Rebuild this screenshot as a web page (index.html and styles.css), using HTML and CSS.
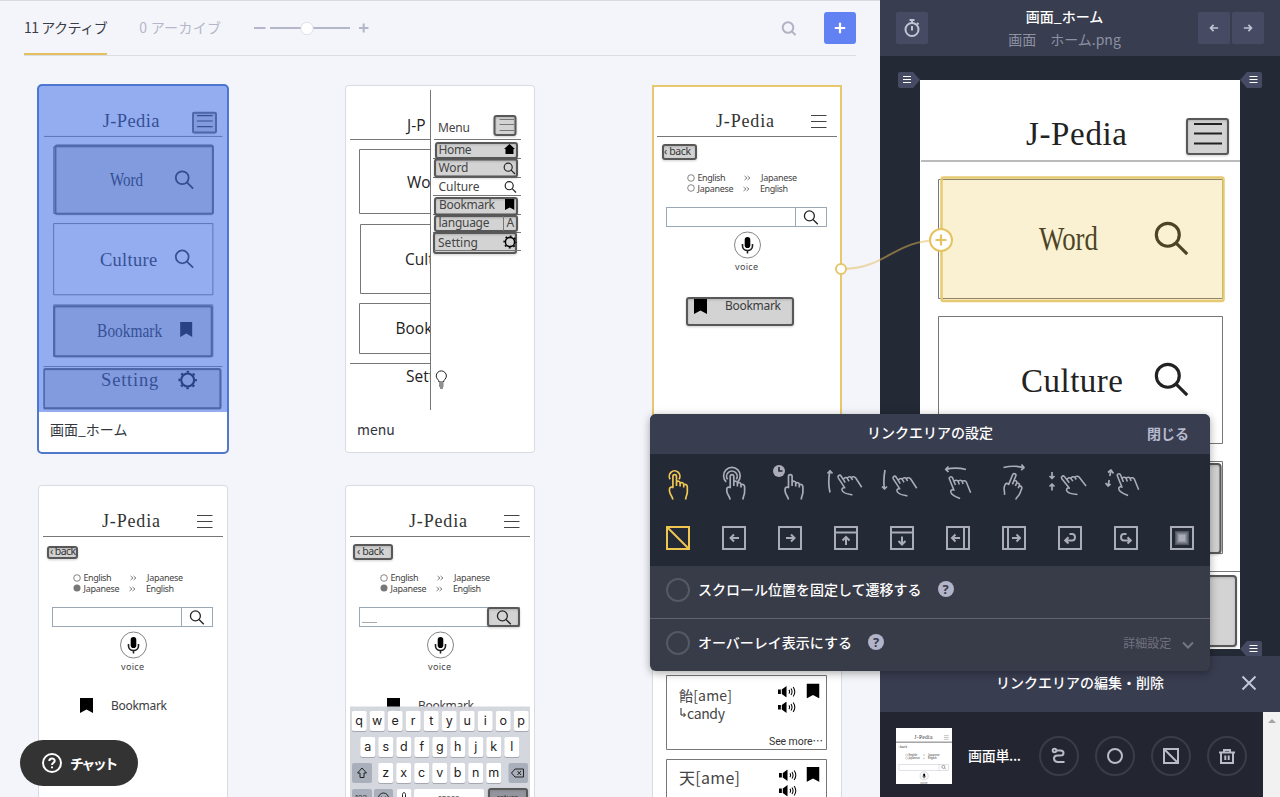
FILE: index.html
```html
<!DOCTYPE html>
<html lang="ja">
<head>
    <meta charset="UTF-8">
    <meta name="viewport" content="width=device-width, initial-scale=1.0">
    <title>J-Pedia - プロトタイプ</title>
    <link rel="stylesheet" href="styles.css">
</head>
<body>
    <!-- 共通シンボル -->
    <svg class="defs" width="0" height="0">
        <symbol id="glass" viewBox="0 0 20 20" overflow="visible">
            <circle cx="8" cy="8" r="6.2"/>
            <path d="M12.5 12.5L18.5 18.5"/>
        </symbol>
        <symbol id="mark" viewBox="0 0 13 15" preserveAspectRatio="none">
            <path d="M0 0H13V15L6.5 11.5L0 15Z"/>
        </symbol>
        <symbol id="gear" viewBox="-10 -10 20 20">
            <circle r="6.6" fill="none" stroke="#000" stroke-width="2.2"/>
            <circle r="8.4" fill="none" stroke="#000" stroke-width="2" stroke-dasharray="2.6 3.997" stroke-dashoffset="1.3"/>
        </symbol>
        <symbol id="speaker" viewBox="0 0 19 12">
            <path d="M0 3.5H3V8.5H0ZM4 3.5L9 0V12L4 8.5Z"/>
            <path d="M11.5 4Q13 6 11.5 8M13.7 2.5Q16 6 13.7 9.5M16 1Q19.5 6 16 11" fill="none" stroke="#000" stroke-width="1.1"/>
        </symbol>
        <symbol id="hand" viewBox="0 0 20 30" overflow="visible">
            <path d="M4.2 29.5C3.6 26 .8 24.5 .8 21V19C.8 17.3 2.5 16.8 4.2 17.5V6.5C4.2 4.1 7.8 4.1 7.8 6.5V16M7.8 12C9 10.6 11.4 11 11.4 13V16.5M11.4 13.2C13 12 15 12.8 15 14.5V17.5M15 14.8C17 13.8 18.6 15 18.6 17V22C18.6 25 17 26 17 29.5"/>
        </symbol>
        <symbol id="swipe-hand" viewBox="0 0 20 30" overflow="visible">
            <path d="M7 30.5C4.5 28 .5 25 .2 21.5C0 18.5 2 17.5 4.2 19.5V6.5C4.2 4.1 7.8 4.1 7.8 6.5V15M7.8 11C9.2 9.6 12 10.2 12 12.4V16M12 12.4C14 11.2 16 12.2 16 14.2V17M16 14.2C18 13.4 20 14.8 20 17V29"/>
        </symbol>

        <!-- ホーム画面 -->
        <symbol id="screen-home" viewBox="0 0 320 569">
            <rect class="paper" width="320" height="569"/>
            <text class="mincho" x="106" y="65" textLength="101">J-Pedia</text>
            <rect class="spot" x="267" y="39" width="41" height="35" rx="2"/>
            <path class="bar" d="M274 44H302M274 53.5H302M274 63.5H302"/>
            <path class="rule" d="M1 81H320"/>
            <rect class="frame" x="18.5" y="99.5" width="284" height="119"/>
            <text class="mincho" x="119" y="170" textLength="59" lengthAdjust="spacingAndGlyphs">Word</text>
            <use class="glass" href="#glass" x="233" y="140" width="37" height="37"/>
            <rect class="frame" x="18.5" y="236.5" width="284" height="127"/>
            <text class="mincho" x="101" y="312" textLength="102">Culture</text>
            <use class="glass" href="#glass" x="233" y="281" width="37" height="37"/>
            <rect class="frame" x="18.5" y="381.5" width="284" height="92"/>
            <rect class="spot" x="19.5" y="384" width="281" height="89" rx="3"/>
            <text class="mincho" x="96" y="439" textLength="116" lengthAdjust="spacingAndGlyphs">Bookmark</text>
            <use href="#mark" x="244" y="412" width="22" height="27"/>
            <path class="rule" d="M0 491.5H320"/>
            <rect class="spot" x="1" y="496" width="315" height="70" rx="3"/>
            <text class="mincho" x="103" y="527" textLength="102">Setting</text>
            <use href="#gear" x="240" y="498" width="35" height="35"/>
        </symbol>

        <!-- 検索画面の共通部分 -->
        <symbol id="screen-search" viewBox="0 0 180 320">
            <text class="mincho-s" x="59" y="36" textLength="58">J-Pedia</text>
            <path class="bar-s" d="M154 24.5H169.5M154 30.5H169.5M154 36.5H169.5"/>
            <path class="rule" d="M0 45.5H180"/>
            <circle class="radio" cx="34" cy="87" r="3.3"/>
            <text class="tiny" x="40.5" y="90" textLength="28">English</text>
            <path class="radio" d="M87.5 85L90 87L87.5 89M90.5 85L93 87L90.5 89"/>
            <text class="tiny" x="104" y="90" textLength="36">Japanese</text>
            <text class="tiny" x="40.5" y="101" textLength="36">Japanese</text>
            <path class="radio" d="M86.5 96L89 98L86.5 100M89.5 96L92 98L89.5 100"/>
            <text class="tiny" x="103" y="101" textLength="28">English</text>
            <rect class="field" x="9.5" y="116.5" width="160" height="19"/>
            <path class="field" d="M138.5 116V136"/>
            <circle class="mic-ring" cx="90.5" cy="154" r="13"/>
            <rect x="87.7" y="146" width="5.6" height="11" rx="2.8"/>
            <path class="thin" stroke-width="1.6" d="M85.5 153V155C85.5 161 95.5 161 95.5 155V153M90.5 159V162.5"/>
            <text class="tiny" x="78" y="179" textLength="23">voice</text>
        </symbol>
    </svg>

    <div class="app">
        <main class="board">
            <div class="toolbar">
                <div class="tab active">11 アクティブ</div>
                <div class="tab archive">0 アーカイブ</div>
                <svg class="zoom-slider" width="116" height="16" viewBox="0 0 116 16">
                    <path d="M1 8H12.5M17 8H97M106 8H115.5M110.7 3.5V12.5" fill="none" stroke="#b4b7c9" stroke-width="2"/>
                    <circle cx="54" cy="8.5" r="6.2" fill="#fff" stroke="#d3d5df" stroke-width=".7"/>
                </svg>
                <svg class="find" width="16" height="16" viewBox="0 0 16 16">
                    <circle cx="7" cy="7.5" r="5.3"/>
                    <path d="M11 11.5L14.5 15"/>
                </svg>
                <button class="add-btn">
                    <svg width="12" height="12" viewBox="0 0 12 12"><path d="M6 .8V11.2M.8 6H11.2" stroke="#fff" stroke-width="2.2"/></svg>
                </button>
            </div>

            <div class="cards">
                <div class="card selected">
                    <div class="shot">
                        <svg viewBox="0 0 320 569">
                            <use href="#screen-home" width="320" height="569"/>
                            <rect class="spot" x="21.5" y="97" width="281" height="122" rx="3"/>
                        </svg>
                    </div>
                    <div class="caption">画面_ホーム</div>
                </div>

                <div class="card">
                    <div class="shot">
                        <svg viewBox="0 0 180 320">
                            <text class="sans" x="57" y="39.5">J-P</text>
                            <path class="rule" d="M0 48.5H80M83 48.5H171"/>
                            <path class="frame" d="M80 58.5H9.5V122.5H80M80 133.5H10.5V202.5H80M80 212.5H9.5V262.5H80"/>
                            <path class="rule" d="M0 272.5H80"/>
                            <text class="sans" x="57" y="96.5">Wo</text>
                            <text class="sans" x="55" y="174">Cult</text>
                            <text class="sans" x="45.5" y="243">Book</text>
                            <text class="sans" x="56" y="291">Sett</text>
                            <rect x="80" y="0" width="4" height="320" fill="#fff"/>
                            <path class="rule" d="M80.5 -1V319"/>
                            <path class="thin" d="M89 291C89 288.500 86.2 288 86.2 285A5.100 5.100 0 0 1 96.400 285C96.400 288 93.600 288.500 93.600 291ZM89 293H93.600M89 295H93.600M90 297H93"/>
                            <text class="item" x="88" y="41" textLength="32">Menu</text>
                            <rect class="spot" x="144.5" y="25" width="21" height="19" rx="2"/>
                            <path class="frame" d="M149.5 28.5H164M149.5 33.5H164M149.5 39.5H164"/>
                            <path class="rule" d="M83 67.5H171M83 86.5H171M83 104.5H171M83 123.5H171M83 141.5H171"/>
                            <rect class="spot" x="86" y="52" width="81" height="15" rx="2"/>
                            <rect class="spot" x="85" y="68.5" width="82" height="17" rx="2"/>
                            <rect class="spot" x="85" y="107" width="82" height="16.5" rx="2"/>
                            <rect class="spot" x="85" y="125" width="82" height="15" rx="2"/>
                            <rect class="spot" x="84" y="142" width="82" height="20" rx="2"/>
                            <text class="item" x="88.5" y="62.5" textLength="33">Home</text>
                            <text class="item" x="88.5" y="81" textLength="30">Word</text>
                            <text class="item" x="88.5" y="100" textLength="41">Culture</text>
                            <text class="item" x="89" y="118" textLength="56">Bookmark</text>
                            <text class="item" x="88.5" y="136" textLength="51">language</text>
                            <text class="item" x="88" y="155.5" textLength="40">Setting</text>
                            <path d="M159.5 53L165 58H163.5V63H155.5V58H154Z"/>
                            <use class="glass-s" href="#glass" x="153" y="71" width="13" height="13"/>
                            <use class="glass-s" href="#glass" x="154" y="89.5" width="13" height="13"/>
                            <use href="#mark" x="155" y="108" width="9.5" height="11"/>
                            <path class="frame" d="M153.5 125V140M84 159.5H171"/>
                            <text class="item" x="156.5" y="136">A</text>
                            <use href="#gear" x="153" y="144" width="14" height="14"/>
                        </svg>
                    </div>
                    <div class="caption">menu</div>
                </div>

                <div class="card linked">
                    <div class="shot">
                        <svg viewBox="0 0 180 320">
                            <rect class="spot" x="6" y="54" width="33" height="14" rx="2"/>
                            <rect class="spot" x="30" y="207" width="106" height="27" rx="2"/>
                            <use href="#screen-search" width="180" height="320"/>
                            <text class="back" x="7" y="64" textLength="27">‹ back</text>
                            <circle class="radio" cx="34" cy="97" r="3.3"/>
                            <use class="glass-m" href="#glass" x="146" y="118.5" width="16" height="16"/>
                            <use href="#mark" x="37" y="208" width="13" height="15"/>
                            <text class="label" x="68" y="219" textLength="56">Bookmark</text>
                        </svg>
                    </div>
                </div>

                <div class="card">
                    <div class="shot">
                        <svg viewBox="0 0 180 320">
                            <rect class="spot" x="5" y="56" width="29" height="11" rx="2"/>
                            <use href="#screen-search" width="180" height="320"/>
                            <text class="back" x="7" y="64" textLength="26">‹ back</text>
                            <circle cx="34" cy="97" r="3.5" fill="#777"/>
                            <use class="glass-m" href="#glass" x="146" y="118.5" width="16" height="16"/>
                            <use href="#mark" x="37" y="207" width="13" height="15"/>
                            <text class="label" x="68" y="219" textLength="56">Bookmark</text>
                        </svg>
                    </div>
                </div>

                <div class="card">
                    <div class="shot">
                        <svg viewBox="0 0 180 320">
                            <rect class="spot" x="4" y="54" width="38" height="14" rx="2"/>
                            <use href="#screen-search" width="180" height="320"/>
                            <text class="back" x="7" y="64" textLength="27">‹ back</text>
                            <circle cx="34" cy="97" r="3.5" fill="#777"/>
                            <path class="caret" d="M12 131.5H27"/>
                            <rect class="spot" x="138" y="117" width="31" height="18" rx="2"/>
                            <use class="glass-m" href="#glass" x="146" y="118.5" width="16" height="16"/>
                            <use href="#mark" x="37" y="207" width="13" height="15"/>
                            <text class="label" x="68" y="219" textLength="56">Bookmark</text>
                            <rect x="0" y="215.5" width="180" height="105" fill="#d3d5dc" fill-opacity=".95"/>
                            <g id="keys"></g>
                            <path class="thin" d="M12 277L16.5 282H14V286.5H10V282H7.5Z"/>
                            <path class="thin" d="M161.5 282L165 278H173.5V286H165ZM167.5 280L171 284M171 280L167.5 284"/>
                            <circle class="thin" cx="33.5" cy="307" r="5"/>
                            <path class="thin" d="M52.5 308V303.5C52.5 301 55.5 301 55.5 303.5V308M31.5 305.5V306M35.5 305.5V306"/>
                            <rect class="spot dark" x="139" y="298" width="38" height="24" rx="2"/>
                            <text class="key-s" x="5" y="310">123</text>
                            <text class="key-s" x="88" y="309.5">space</text>
                            <text class="key-s" x="147" y="310">return</text>
                        </svg>
                    </div>
                </div>

                <div class="card">
                    <div class="shot">
                        <svg viewBox="0 0 180 320">
                            <rect class="frame" x="9.5" y="184.5" width="160" height="74"/>
                            <text class="word" x="22" y="210" textLength="53">飴[ame]</text>
                            <path class="thin" d="M24 217V224H28M26.5 222L28.5 224L26.5 226"/>
                            <text class="word" x="30" y="227.5" textLength="38">candy</text>
                            <use href="#speaker" x="121" y="195" width="18" height="11.5"/>
                            <use href="#speaker" x="121" y="210.5" width="18" height="11.5"/>
                            <use href="#mark" x="149.5" y="192.5" width="13" height="15"/>
                            <text class="more" x="112" y="254" textLength="54">See more⋯</text>
                            <rect class="frame" x="9.5" y="268.5" width="160" height="74"/>
                            <text class="word big" x="22" y="293" textLength="61">天[ame]</text>
                            <use href="#speaker" x="122" y="278.5" width="18" height="11.5"/>
                            <use href="#speaker" x="122" y="294" width="18" height="11.5"/>
                            <use href="#mark" x="149.5" y="276" width="13" height="15"/>
                        </svg>
                    </div>
                </div>
            </div>
        </main>

        <aside class="inspector">
            <div class="inspector-head">
                <div class="tool-btn">
                    <svg width="16" height="20" viewBox="0 0 16 20">
                        <circle cx="8" cy="11.5" r="6.5"/>
                        <path d="M5.5 2H10.5M8 2V5M8 8V12.5M13 5L14.5 6.5"/>
                    </svg>
                </div>
                <div class="titles">
                    <div class="title">画面_ホーム</div>
                    <div class="filename">画面　ホーム.png</div>
                </div>
                <div class="nav">
                    <div class="tool-btn"><svg width="10" height="10" viewBox="0 0 12 12"><path d="M11 6H2M5.5 2.2L1.8 6L5.5 9.8"/></svg></div>
                    <div class="tool-btn"><svg width="10" height="10" viewBox="0 0 12 12"><path d="M1 6H10M6.5 2.2L10.2 6L6.5 9.8"/></svg></div>
                </div>
            </div>

            <div class="stage">
                <div class="preview">
                    <svg class="preview-screen" viewBox="0 0 320 569">
                        <use href="#screen-home" width="320" height="569"/>
                        <rect class="active-spot" x="21.5" y="97.5" width="282" height="123.5" rx="2"/>
                    </svg>
                    <svg class="tag tag-left" width="22" height="16" viewBox="0 0 22 16"><path class="tag-bg" d="M2 0H15L22 8L15 16H2Q0 16 0 14V2Q0 0 2 0Z"/><path class="tag-bars" d="M5 4.5H13M5 7.5H13M5 10.5H13"/></svg>
                    <svg class="tag tag-right" width="22" height="16" viewBox="0 0 22 16"><path class="tag-bg" d="M20 0H7L0 8L7 16H20Q22 16 22 14V2Q22 0 20 0Z"/><path class="tag-bars" d="M9.5 4.5H17.5M9.5 7.5H17.5M9.5 10.5H17.5"/></svg>
                    <svg class="tag tag-bottom" width="22" height="16" viewBox="0 0 22 16"><path class="tag-bg" d="M20 0H7L0 8L7 16H20Q22 16 22 14V2Q22 0 20 0Z"/><path class="tag-bars" d="M9.5 4.5H17.5M9.5 7.5H17.5M9.5 10.5H17.5"/></svg>
                </div>
            </div>

            <div class="edit-head">
                <span>リンクエリアの編集・削除</span>
                <svg class="close" width="16" height="16" viewBox="0 0 16 16"><path d="M1.5 1.5L14.5 14.5M14.5 1.5L1.5 14.5"/></svg>
            </div>
            <div class="edit-body">
                <div class="edit-row">
                    <svg class="thumb" viewBox="0 0 180 180">
                        <rect class="paper" width="180" height="180"/>
                        <use href="#screen-search" width="180" height="320"/>
                        <text class="back" x="7" y="64">‹ back</text>
                        <circle class="radio" cx="34" cy="97" r="3.3"/>
                        <use class="glass-m" href="#glass" x="146" y="118.5" width="16" height="16"/>
                    </svg>
                    <span class="edit-name">画面単...</span>
                    <div class="round-btns">
                        <div class="round-btn"><svg width="20" height="20" viewBox="0 0 20 20"><circle cx="5.5" cy="4.5" r="1.8"/><path d="M7.5 4.500H11.500Q14.500 4.500 14.500 7T11.500 9.500H8.500Q5 9.500 5 12.500T8.500 16H15.500"/></svg></div>
                        <div class="round-btn"><svg width="20" height="20" viewBox="0 0 20 20"><circle cx="10" cy="10" r="7"/></svg></div>
                        <div class="round-btn"><svg width="20" height="20" viewBox="0 0 20 20"><path d="M3 3H17V17H3ZM3 3L17 17"/></svg></div>
                        <div class="round-btn"><svg width="20" height="20" viewBox="0 0 20 20"><path d="M2 6.5H18M4 6.5V17H16V6.5M7 6.5V4H13V6.5M8.3 9.5V14M11.7 9.5V14"/></svg></div>
                    </div>
                </div>
                <div class="scrollbar"><i></i></div>
            </div>
        </aside>
    </div>

    <!-- リンク線 -->
    <svg class="connector" width="124" height="60" viewBox="0 0 124 60">
        <path d="M9 43C56 43 60 14 109 14" fill="none" stroke="#e3b957" stroke-width="2" stroke-opacity=".5"/>
        <circle cx="9" cy="43" r="5" fill="#fff" stroke="#e6c66a" stroke-width="2"/>
        <circle cx="109" cy="14" r="11" fill="#fff" stroke="#e6c35f" stroke-width="2"/>
        <path d="M103.5 14H114.5M109 8.5V19.5" stroke="#e6c35f" stroke-width="2.2"/>
    </svg>

    <div class="popover">
        <div class="popover-head">
            <span>リンクエリアの設定</span>
            <b>閉じる</b>
        </div>
        <div class="icon-grid">
            <svg class="on" viewBox="-28 -28 56 56"><use href="#hand" x="-9.3" y="-14" width="20" height="30"/><path d="M-7.8 -4.8A5.3 5.3 0 1 1 1 -4.8"/></svg>
            <svg viewBox="-28 -28 56 56"><use href="#hand" x="-8" y="-14" width="20" height="30"/><path d="M-6.5 -4.6A5.3 5.3 0 1 1 2.3 -4.6M-7.8 -2.2A8.3 8.3 0 1 1 3.6 -2.2"/></svg>
            <svg viewBox="-28 -28 56 56"><use href="#hand" x="-5.7" y="-14" width="20" height="30"/><circle class="clock" cx="-11" cy="-13" r="6"/><path class="clock-hand" d="M-11 -17V-13H-7.5"/></svg>
            <svg viewBox="-28 -28 56 56"><use href="#swipe-hand" width="20" height="30" transform="translate(2 -1) rotate(-33) scale(.92) translate(-10 -17)"/><path d="M-16 8.5Q-18.5 -2 -16 -13M-18.5 -10.5L-16 -13.3L-13.5 -10.5"/></svg>
            <svg viewBox="-28 -28 56 56"><use href="#swipe-hand" width="20" height="30" transform="translate(1 0) rotate(-33) scale(.92) translate(-10 -17)"/><path d="M-17 -14Q-19 -3 -17.5 5M-20 2.5L-17.5 5L-15 2.5"/></svg>
            <svg viewBox="-28 -28 56 56"><use href="#swipe-hand" width="20" height="30" transform="translate(0 2) rotate(-22) scale(.92) translate(-10 -17)"/><path d="M8 -14.5Q-2 -17 -12 -14.7M-9.5 -17.5L-12.3 -14.7L-9.5 -12"/></svg>
            <svg viewBox="-28 -28 56 56"><use href="#hand" width="20" height="30" transform="translate(0 2) rotate(22) scale(.95) translate(-10 -17)"/><path d="M-10.5 -16.5Q0 -19 10 -16.5M7.5 -19.5L10 -16.5L7.2 -14"/></svg>
            <svg viewBox="-28 -28 56 56"><use href="#swipe-hand" width="20" height="30" transform="translate(2 -1) rotate(-38) scale(.92) translate(-10 -17)"/><path d="M-18 -12V-5.5M-20.5 -8L-18 -5.5L-15.5 -8M-18 6.5V0M-20.5 2.5L-18 0L-15.5 2.5"/></svg>
            <svg viewBox="-28 -28 56 56"><use href="#swipe-hand" width="20" height="30" transform="translate(0 -1) rotate(-22) scale(.92) translate(-10 -17)"/><path d="M-15 -13.5L-16.2 -8M-16.8 -4L-18 2M-18 -11.5L-15 -14L-12.5 -10.5M-20.5 -1L-18 2L-15.5 0"/></svg>
            <i></i>

            <svg class="on" viewBox="-28 -28 56 56"><path d="M-11 -11H11V11H-11ZM-11 -11L11 11"/></svg>
            <svg viewBox="-28 -28 56 56"><path d="M-11 -11H11V11H-11ZM5 0H-3M0 -3.5L-3.5 0L0 3.5"/></svg>
            <svg viewBox="-28 -28 56 56"><path d="M-11 -11H11V11H-11ZM-4 0H4M1 -3.5L4.5 0L1 3.5"/></svg>
            <svg viewBox="-28 -28 56 56"><path d="M-11 -11H11V11H-11ZM-11 -5.5H11M0 7V-.5M-3.5 2.5L0 -1L3.5 2.5"/></svg>
            <svg viewBox="-28 -28 56 56"><path d="M-11 -11H11V11H-11ZM-11 -5.5H11M0 -1.5V6M-3.5 3L0 6.5L3.5 3"/></svg>
            <svg viewBox="-28 -28 56 56"><path d="M-11 -11H11V11H-11ZM6 -11V11M2 0H-5.5M-2.5 -3.5L-6 0L-2.5 3.5"/></svg>
            <svg viewBox="-28 -28 56 56"><path d="M-11 -11H11V11H-11ZM-6 -11V11M-2 0H5.5M2.5 -3.5L6 0L2.5 3.5"/></svg>
            <svg viewBox="-28 -28 56 56"><path d="M-11 -11H11V11H-11ZM-.5 -4H2C6 -4 6 2.5 2 2.5H-4M-1.5 -.8L-4.8 2.5L-1.5 5.5"/></svg>
            <svg viewBox="-28 -28 56 56"><path d="M-11 -11H11V11H-11ZM.5 -4H-2C-6 -4 -6 2.5 -2 2.5H4M1.5 -.8L4.8 2.5L1.5 5.5"/></svg>
            <svg viewBox="-28 -28 56 56"><path d="M-11 -11H11V11H-11Z"/><g class="fade"><path d="M-7 -7H7V7H-7Z" opacity=".35"/><path d="M-5.5 -5.5H5.5V5.5H-5.5Z" opacity=".5"/><path d="M-3.5 -3.5H3.5V3.5H-3.5Z"/></g></svg>
        </div>
        <div class="option">
            <span class="check"></span>
            <span>スクロール位置を固定して遷移する</span>
            <span class="help">?</span>
        </div>
        <div class="option">
            <span class="check"></span>
            <span>オーバーレイ表示にする</span>
            <span class="help">?</span>
            <span class="detail">詳細設定 <svg width="12" height="8" viewBox="0 0 12 8"><path d="M1 1.5L6 6.5L11 1.5"/></svg></span>
        </div>
    </div>

    <div class="chat">
        <svg width="20" height="20" viewBox="0 0 20 20">
            <circle cx="10" cy="10" r="9"/>
            <path d="M7.3 8C7.3 4.6 12.7 4.6 12.7 7.8C12.7 9.8 10 9.8 10 12M10 13.6V15.2"/>
        </svg>
        <span>チャット</span>
    </div>

    <script>
        // キーボードのキーを描画
        const svgNS = 'http://www.w3.org/2000/svg';
        const keys = document.getElementById('keys');

        function addKey(x, y, w, label, cls) {
            const rect = document.createElementNS(svgNS, 'rect');
            rect.setAttribute('x', x);
            rect.setAttribute('y', y);
            rect.setAttribute('width', w);
            rect.setAttribute('height', 20);
            rect.setAttribute('rx', 2);
            rect.setAttribute('class', cls || 'key');
            keys.appendChild(rect);
            if (!label) return;
            const text = document.createElementNS(svgNS, 'text');
            text.setAttribute('x', x + w / 2);
            text.setAttribute('y', y + 14);
            text.setAttribute('class', 'key-text');
            text.textContent = label;
            keys.appendChild(text);
        }

        [['qwertyuiop', 1.7, 220], ['asdfghjkl', 10.3, 246], ['zxcvbnm', 28.2, 272]].forEach(([row, x, y]) => {
            row.split('').forEach((c, i) => addKey(x + i * 18, y, 15, c));
        });
        addKey(2, 272, 20, '', 'key-gray');
        addKey(158.5, 272, 19.5, '', 'key-gray');
        addKey(2, 298, 20, '', 'key-gray');
        addKey(24, 298, 19, '', 'key-gray');
        addKey(47, 298, 14.5, '');
        addKey(64, 298, 70, '');
    </script>
</body>
</html>
```
FILE: styles.css
```css
* {
    box-sizing: border-box;
    margin: 0;
    padding: 0;
}

body {
    font-family: "Noto Sans CJK JP", sans-serif;
    font-size: 14px;
    height: 100vh;
    overflow: hidden;
    background: #f4f5fa;
    color: #33363f;
}

.defs {
    position: absolute;
}

.app {
    display: flex;
    height: 100vh;
}

/* ボード */
.board {
    flex: 1;
    overflow: hidden;
    border-top: 1px solid #d9dae0;
}

.toolbar {
    display: flex;
    align-items: center;
    height: 55px;
    margin: 0 24px;
    border-bottom: 1px solid #dcdde3;
}

.tab {
    height: 54px;
    line-height: 53px;
    margin-right: 32px;
    color: #b4b7c9;
    white-space: nowrap;
    letter-spacing: -0.5px;
}

.tab.active {
    color: #3a3d46;
    border-bottom: 2px solid #e3bf60;
}

.tab.archive {
    letter-spacing: 0.3px;
}

.find {
    margin-left: auto;
    margin-right: 27px;
    fill: none;
    stroke: #b0b3c4;
    stroke-width: 2;
}

.add-btn {
    width: 32px;
    height: 32px;
    border: none;
    border-radius: 3px;
    background: #6281f3;
    display: flex;
    align-items: center;
    justify-content: center;
}

.cards {
    display: grid;
    grid-template-columns: repeat(3, 190px);
    grid-auto-rows: 368px;
    gap: 32px 117px;
    padding: 29px 38px 0;
}

.card {
    background: #fff;
    border-radius: 4px;
    box-shadow: inset 0 0 0 1px #dadbe1;
}

.shot {
    position: relative;
    height: 327px;
    padding: 6px 5px 0;
}

.shot svg {
    display: block;
    width: 180px;
    height: 320px;
    overflow: visible;
}

.card:nth-child(n+4) .shot svg {
    overflow: hidden;
}

.card.selected {
    outline: 2px solid #5079ca;
    outline-offset: -1px;
}

.card.selected .shot svg {
    height: 319px;
}

.card.selected .shot::after {
    content: "";
    position: absolute;
    inset: 0;
    border-radius: 4px 4px 0 0;
    background: rgba(69, 114, 229, 0.58);
}

.card.linked {
    border-radius: 0;
    box-shadow: inset 0 0 0 2px #e8c86e;
}

.caption {
    padding-left: 12px;
    line-height: 34px;
}

/* 画面の部品 */
.paper {
    fill: #fff;
}

.mincho {
    font: 33px "Liberation Serif", serif;
    fill: #222;
}

.mincho-s {
    font: 18px "Liberation Serif", serif;
    fill: #333;
}

.sans {
    font: 15.5px "Open Sans", sans-serif;
    fill: #222;
}

.item {
    font: 12px "Noto Sans", sans-serif;
    fill: #444;
}

.tiny {
    font: 9px "Noto Sans", sans-serif;
    fill: #444;
}

.back {
    font: 10.5px "Noto Sans", sans-serif;
    fill: #333;
}

.label {
    font: 12px "Noto Sans", sans-serif;
    fill: #3c3c3c;
}

.word {
    font: 14px "Noto Sans CJK JP", sans-serif;
    fill: #444;
}

.word.big {
    font-size: 16px;
}

.more {
    font: 10.5px Roboto, "Noto Sans CJK JP", sans-serif;
    fill: #333;
}

.spot {
    fill: rgba(0, 0, 0, 0.15);
    stroke: #585858;
    stroke-width: 2;
    vector-effect: non-scaling-stroke;
    filter: drop-shadow(0 1px 1px rgba(0, 0, 0, 0.2));
}

.spot.dark {
    fill: rgba(70, 75, 85, 0.4);
}

.active-spot {
    fill: rgba(234, 190, 56, 0.22);
    stroke: #e6c972;
    stroke-width: 2.5;
}

.frame,
.rule {
    fill: none;
    stroke: #777;
    stroke-width: 1;
    vector-effect: non-scaling-stroke;
}

.caret {
    stroke: #aaa;
}

.bar {
    fill: none;
    stroke: #222;
    stroke-width: 2;
}

.bar-s {
    stroke: #444;
    stroke-width: 1;
}

.field {
    fill: none;
    stroke: #9aa7b5;
}

.radio,
.mic-ring {
    fill: none;
    stroke: #666;
    stroke-width: 0.8;
}

.thin {
    fill: none;
    stroke: #222;
}

.glass {
    fill: none;
    stroke: #222;
    stroke-width: 1.7;
}

.glass-s {
    fill: none;
    stroke: #222;
    stroke-width: 1.8;
}

.glass-m {
    fill: none;
    stroke: #222;
    stroke-width: 1.6;
}

.key {
    fill: #fff;
    filter: drop-shadow(0 1px 0 #a5a8b0);
}

.key-gray {
    fill: #a9afbb;
}

.key-text {
    font: 12.5px Inter, sans-serif;
    fill: #222;
    text-anchor: middle;
}

.key-s {
    font: 7.5px Inter, sans-serif;
    fill: #333;
}

/* 右パネル */
.inspector {
    width: 400px;
    display: flex;
    flex-direction: column;
    background: #242936;
    color: #fff;
}

.inspector-head {
    flex: none;
    display: flex;
    align-items: center;
    justify-content: space-between;
    height: 56px;
    padding: 0 16px;
    background: #393d50;
}

.tool-btn {
    display: flex;
    align-items: center;
    justify-content: center;
    width: 32px;
    height: 32px;
    border-radius: 2px;
    background: #464b63;
}

.tool-btn svg {
    fill: none;
    stroke: #c0c4d4;
    stroke-width: 2;
}

.titles {
    margin-left: 3px;
    text-align: center;
    line-height: 23px;
}

.title {
    font-weight: 500;
}

.filename {
    color: #8d91a3;
}

.nav {
    display: flex;
    gap: 2px;
}

.stage {
    flex: none;
    height: 600px;
    padding: 24px 40px 0;
}

.preview {
    position: relative;
    width: 320px;
    height: 569px;
}

.preview-screen {
    display: block;
    width: 320px;
    height: 569px;
}

.tag {
    position: absolute;
}

.tag-left {
    top: -8px;
    left: -22px;
}

.tag-right {
    top: -8px;
    right: -22px;
}

.tag-bottom {
    bottom: -8px;
    right: -22px;
}

.tag-bg {
    fill: #464b63;
}

.tag-bars {
    stroke: #fff;
    stroke-width: 1.2;
}

.edit-head {
    position: relative;
    z-index: 1;
    flex: none;
    height: 56px;
    line-height: 53px;
    text-align: center;
    font-weight: 500;
    background: #393d50;
}

.close {
    position: absolute;
    top: 19px;
    right: 23px;
    fill: none;
    stroke: #c3c6d8;
    stroke-width: 2;
}

.edit-body {
    flex: 1;
    display: flex;
    background: #232530;
}

.edit-row {
    flex: 1;
    display: flex;
    align-items: center;
    height: 88px;
    padding: 0 16px;
}

.thumb {
    width: 56px;
    height: 56px;
    margin-right: 16px;
}

.edit-name {
    margin-top: -2px;
    font-weight: 500;
    letter-spacing: -0.3px;
}

.round-btns {
    display: flex;
    gap: 16px;
    margin-left: auto;
}

.round-btn {
    display: flex;
    align-items: center;
    justify-content: center;
    width: 40px;
    height: 40px;
    border: 2px solid #3a3c49;
    border-radius: 50%;
}

.round-btn svg {
    fill: none;
    stroke: #b9bbc6;
    stroke-width: 2;
}

.scrollbar {
    width: 17px;
    background: #f1f1f1;
}

.scrollbar i {
    display: block;
    width: 0;
    margin: 7px auto 0;
    border: 4px solid transparent;
    border-top: none;
    border-bottom-color: #a3a3a3;
}

.connector {
    position: absolute;
    left: 832px;
    top: 226px;
}

/* リンクエリアの設定 */
.popover {
    position: absolute;
    left: 650px;
    top: 414px;
    z-index: 2;
    width: 560px;
    border-radius: 6px;
    overflow: hidden;
    color: #fff;
    font-weight: 500;
    background: #383b48;
    box-shadow: 0 2px 8px rgba(0, 0, 0, 0.35);
}

.popover-head {
    position: relative;
    height: 40px;
    line-height: 37px;
    text-align: center;
    background: #393d50;
}

.popover-head b {
    position: absolute;
    right: 21px;
    top: 1px;
    color: #b7bace;
}

.icon-grid {
    display: grid;
    grid-template-columns: repeat(10, 56px);
    grid-auto-rows: 56px;
    background: #242936;
    fill: none;
    stroke: #aaadb8;
    stroke-width: 1.7;
    stroke-linejoin: round;
}

.icon-grid svg:nth-child(n+11) {
    stroke-width: 2;
    stroke-linejoin: miter;
}

.icon-grid svg:nth-child(-n+9) {
    margin-top: 2px;
    height: 56px;
}

.icon-grid .on {
    stroke: #f0c653;
}

.icon-grid .clock {
    fill: #aaadb8;
    stroke: none;
}

.icon-grid .clock-hand {
    stroke: #242936;
}

.icon-grid .fade {
    fill: #aaadb8;
    stroke: none;
}

.option {
    display: flex;
    align-items: center;
    height: 52px;
    padding: 0 16px;
}

.option:last-child {
    height: 53px;
    border-top: 1px solid #60636f;
}

.check {
    width: 24px;
    height: 24px;
    margin-top: -4px;
    margin-right: 8px;
    border: 2px solid #545966;
    border-radius: 50%;
}

.option > span:not(.check) {
    margin-top: -6px;
}

.help {
    width: 16px;
    height: 16px;
    margin-left: 16px;
    border-radius: 50%;
    background: #b2b5ca;
    color: #383b48;
    font: bold 13px/16px "Open Sans", sans-serif;
    text-align: center;
}

.detail {
    margin-left: auto;
    color: #70737f;
    font-size: 12px;
    font-weight: 400;
}

.detail svg {
    margin-left: 8px;
    vertical-align: -1px;
    fill: none;
    stroke: #747783;
    stroke-width: 2;
}

.chat {
    position: fixed;
    left: 20px;
    bottom: 11px;
    display: flex;
    align-items: center;
    gap: 8px;
    width: 118px;
    height: 46px;
    padding-left: 22px;
    border-radius: 23px;
    background: #333;
    color: #fff;
    font-weight: 700;
    letter-spacing: -2.5px;
}

.chat svg {
    fill: none;
    stroke: #fff;
    stroke-width: 2;
}
```
